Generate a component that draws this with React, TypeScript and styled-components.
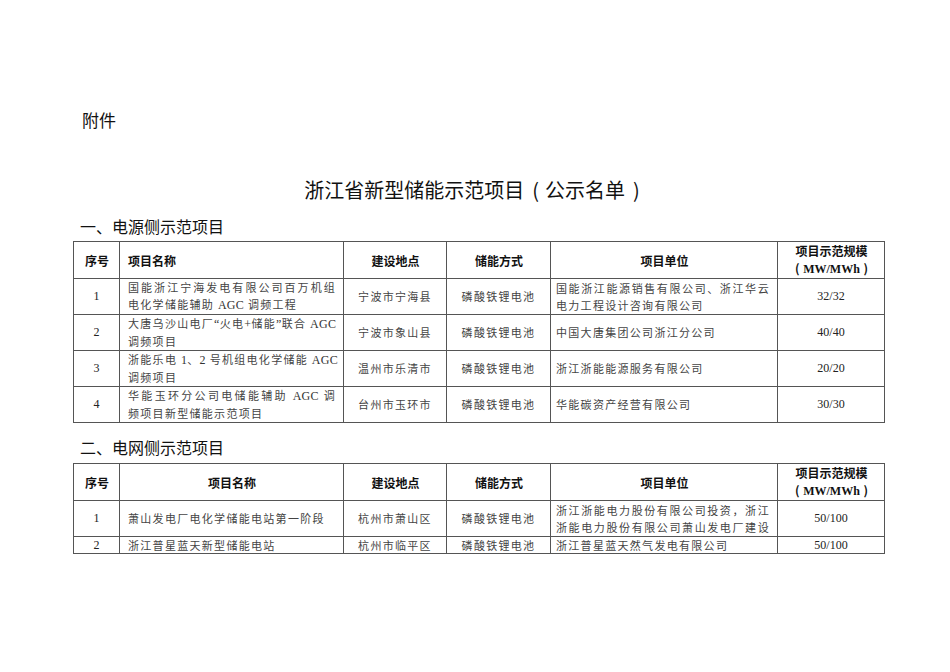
import React from 'react';
import styled, { createGlobalStyle } from 'styled-components';

const Global = createGlobalStyle`
  html, body { margin: 0; padding: 0; background: #fff; }
  body { font-family: "Noto Sans CJK SC", sans-serif; color: #111; }
`;

const Page = styled.div`
  width: 950px;
  height: 672px;
  box-sizing: border-box;
  padding: 108px 66px 0 73px;
`;

const Attachment = styled.div`
  font-size: 17px;
  line-height: 24px;
  padding-left: 9px;
`;

const Title = styled.h1`
  margin: 43px 0 0;
  padding-right: 13px;
  font-size: 20px;
  font-weight: 400;
  line-height: 30px;
  text-align: center;
`;

const Paren = styled.span<{ $l: number; $r: number }>`
  margin: 0 ${(p) => p.$r}px 0 ${(p) => p.$l}px;
`;

const Heading = styled.h2<{ $gap: number }>`
  margin: ${(p) => p.$gap}px 0 0;
  padding-left: 7px;
  font-size: 16px;
  font-weight: 400;
  line-height: 22px;
`;

const Table = styled.table<{ $gap: number }>`
  width: 811px;
  margin-top: ${(p) => p.$gap}px;
  border-collapse: collapse;
  table-layout: fixed;
`;

const Th = styled.th<{ $align?: string }>`
  border: 1px solid #555;
  padding: 0 7px 0 8px;
  font-size: 12px;
  font-weight: 700;
  line-height: 17px;
  color: #111;
  text-align: ${(p) => p.$align || 'center'};
  vertical-align: middle;
  white-space: nowrap;
`;

const SerifBold = styled.span`
  font-family: "Liberation Serif", serif;
  font-weight: 700;
`;

const WideParen = styled.span`
  display: inline-block;
  width: 12px;
  text-align: center;
`;

const Row = styled.tr<{ $h: number }>`
  height: ${(p) => p.$h}px;
`;

const Td = styled.td<{ $align?: string; $pl?: number; $pr?: number; $lh?: number }>`
  border: 1px solid #555;
  padding: 0 ${(p) => p.$pr ?? 6}px 0 ${(p) => p.$pl ?? 6}px;
  font-family: "Noto Sans CJK SC", sans-serif;
  font-size: 11px;
  letter-spacing: 1.3px;
  line-height: ${(p) => p.$lh ?? 17}px;
  color: #444;
  text-align: ${(p) => p.$align || 'center'};
  vertical-align: middle;
  white-space: nowrap;
  overflow: hidden;
`;

const NumTd = styled(Td)`
  font-family: "Liberation Serif", serif;
  font-size: 12px;
  letter-spacing: 0;
  color: #222;
`;

const Latin = styled.span`
  font-family: "Liberation Serif", serif;
  font-size: 12px;
  letter-spacing: 0.3px;
  color: #333;
`;

const Line = styled.span<{ $justify?: boolean }>`
  display: block;
  text-align: ${(p) => (p.$justify ? 'justify' : 'left')};
  text-align-last: ${(p) => (p.$justify ? 'justify' : 'left')};
`;

const Cols = () => (
  <colgroup>
    <col style={{ width: 46 }} />
    <col style={{ width: 224 }} />
    <col style={{ width: 103 }} />
    <col style={{ width: 104 }} />
    <col style={{ width: 227 }} />
    <col style={{ width: 107 }} />
  </colgroup>
);

const Header = ({ nameAlign }: { nameAlign: string }) => (
  <thead>
    <Row $h={35}>
      <Th>序号</Th>
      <Th $align={nameAlign}>项目名称</Th>
      <Th>建设地点</Th>
      <Th>储能方式</Th>
      <Th>项目单位</Th>
      <Th>
        项目示范规模
        <br />
        <WideParen>(</WideParen>
        <SerifBold>MW/MWh</SerifBold>
        <WideParen>)</WideParen>
      </Th>
    </Row>
  </thead>
);

const latinRe = /([A-Za-z0-9+“”]+)/;
const renderText = (s: string) =>
  s.split(latinRe).map((part, i) =>
    /^[A-Za-z0-9+“”]+$/.test(part) ? <Latin key={i}>{part}</Latin> : <React.Fragment key={i}>{part}</React.Fragment>
  );

type Item = {
  no: string;
  name: string[];
  place: string;
  unit: string[];
  scale: string;
  h: number;
  justifyLastUnit?: boolean;
  lh?: number;
};

const source: Item[] = [
  {
    no: '1',
    name: ['国能浙江宁海发电有限公司百万机组', '电化学储能辅助 AGC 调频工程'],
    place: '宁波市宁海县',
    unit: ['国能浙江能源销售有限公司、浙江华云', '电力工程设计咨询有限公司'],
    scale: '32/32',
    h: 36,
  },
  {
    no: '2',
    name: ['大唐乌沙山电厂“火电+储能”联合 AGC', '调频项目'],
    place: '宁波市象山县',
    unit: ['中国大唐集团公司浙江分公司'],
    scale: '40/40',
    h: 34,
  },
  {
    no: '3',
    name: ['浙能乐电 1、2 号机组电化学储能 AGC', '调频项目'],
    place: '温州市乐清市',
    unit: ['浙江浙能能源服务有限公司'],
    scale: '20/20',
    h: 34,
  },
  {
    no: '4',
    name: ['华能玉环分公司电储能辅助 AGC 调', '频项目新型储能示范项目'],
    place: '台州市玉环市',
    unit: ['华能碳资产经营有限公司'],
    scale: '30/30',
    h: 36,
  },
];

const grid: Item[] = [
  {
    no: '1',
    name: ['萧山发电厂电化学储能电站第一阶段'],
    place: '杭州市萧山区',
    unit: ['浙江浙能电力股份有限公司投资，浙江', '浙能电力股份有限公司萧山发电厂建设'],
    scale: '50/100',
    h: 36,
    justifyLastUnit: true,
  },
  {
    no: '2',
    name: ['浙江普星蓝天新型储能电站'],
    place: '杭州市临平区',
    unit: ['浙江普星蓝天然气发电有限公司'],
    scale: '50/100',
    h: 17,
    lh: 15,
  },
];

const Body = ({ items }: { items: Item[] }) => (
  <tbody>
    {items.map((it) => (
      <Row key={it.no} $h={it.h}>
        <NumTd $lh={it.lh}>{it.no}</NumTd>
        <Td $align="left" $pl={8} $pr={7} $lh={it.lh}>
          {it.name.map((l, i) => (
            <Line key={i} $justify={i < it.name.length - 1}>
              {renderText(l)}
            </Line>
          ))}
        </Td>
        <Td $lh={it.lh}>{it.place}</Td>
        <Td $lh={it.lh}>磷酸铁锂电池</Td>
        <Td $align="left" $pl={5} $pr={7} $lh={it.lh}>
          {it.unit.map((l, i) => (
            <Line key={i} $justify={i < it.unit.length - 1 || !!it.justifyLastUnit}>
              {l}
            </Line>
          ))}
        </Td>
        <NumTd $lh={it.lh}>{it.scale}</NumTd>
      </Row>
    ))}
  </tbody>
);

export default function App() {
  return (
    <>
      <Global />
      <Page>
        <Attachment>附件</Attachment>
        <Title>
          浙江省新型储能示范项目<Paren $l={8} $r={6}>(</Paren>公示名单<Paren $l={8} $r={0}>)</Paren>
        </Title>
        <Heading $gap={10}>一、电源侧示范项目</Heading>
        <Table $gap={4}>
          <Cols />
          <Header nameAlign="left" />
          <Body items={source} />
        </Table>
        <Heading $gap={13}>二、电网侧示范项目</Heading>
        <Table $gap={5}>
          <Cols />
          <Header nameAlign="center" />
          <Body items={grid} />
        </Table>
      </Page>
    </>
  );
}
